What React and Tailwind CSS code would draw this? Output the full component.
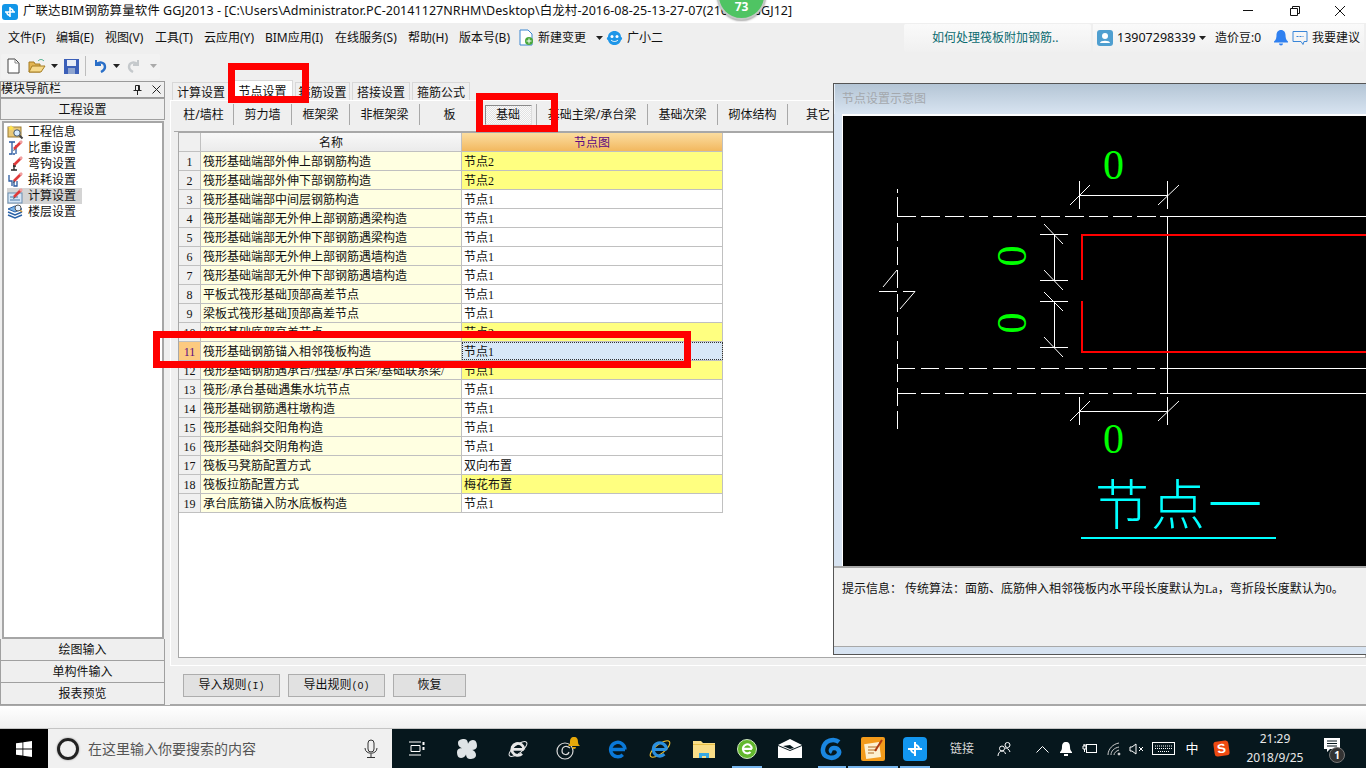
import React from "react";

const ROWS = [
  ["筏形基础端部外伸上部钢筋构造", "节点2", 1],
  ["筏形基础端部外伸下部钢筋构造", "节点2", 1],
  ["筏形基础端部中间层钢筋构造", "节点1", 0],
  ["筏形基础端部无外伸上部钢筋遇梁构造", "节点1", 0],
  ["筏形基础端部无外伸下部钢筋遇梁构造", "节点1", 0],
  ["筏形基础端部无外伸上部钢筋遇墙构造", "节点1", 0],
  ["筏形基础端部无外伸下部钢筋遇墙构造", "节点1", 0],
  ["平板式筏形基础顶部高差节点", "节点1", 0],
  ["梁板式筏形基础顶部高差节点", "节点1", 0],
  ["筏形基础底部高差节点", "节点2", 1],
  ["筏形基础钢筋锚入相邻筏板构造", "节点1", 2],
  ["筏形基础钢筋遇承台/独基/承台梁/基础联系梁/", "节点1", 1],
  ["筏形/承台基础遇集水坑节点", "节点1", 0],
  ["筏形基础钢筋遇柱墩构造", "节点1", 0],
  ["筏形基础斜交阳角构造", "节点1", 0],
  ["筏形基础斜交阴角构造", "节点1", 0],
  ["筏板马凳筋配置方式", "双向布置", 0],
  ["筏板拉筋配置方式", "梅花布置", 1],
  ["承台底筋锚入防水底板构造", "节点1", 0],
];

const Caret = ({ c = "#222" }) => (
  <svg width="7" height="4" viewBox="0 0 7 4"><path d="M0 0h7L3.5 4z" fill={c} /></svg>
);

const LogoApp = () => (
  <svg width="16" height="16" viewBox="0 0 16 16">
    <rect width="16" height="16" rx="3" fill="#1296e8" />
    <path d="M8 3v10M3 8h10M8 5a2.5 2.5 0 0 1 3 3M8 11a2.5 2.5 0 0 1-3-3" stroke="#fff" strokeWidth="1.6" fill="none" />
  </svg>
);

const EIcon = ({ color, ring, size = 24, ringColor }) => (
  <svg width={size} height={size} viewBox="0 0 24 24" fill="none">
    {ring && <ellipse cx="12" cy="12" rx="13" ry="5" transform="rotate(-38 12 12)" stroke={ringColor || color} strokeWidth="1.2" />}
    <path d="M5 12.5h14M19 12.5a7.2 7.2 0 1 0-2.2 5.2" stroke={color} strokeWidth="3.4" />
  </svg>
);

function NavIcon({ kind }) {
  if (kind === 0)
    return (
      <svg width="17" height="16" viewBox="0 0 17 16">
        <rect x="1" y="3" width="13" height="10" fill="#e8c878" stroke="#9a7a30" />
        <path d="M4 1l1 2 2 0-1.5 1.5.5 2-2-1-2 1 .5-2L1 3h2z" fill="#ffe24a" />
        <circle cx="10" cy="9" r="3.2" fill="#d7ecff" stroke="#456" />
        <path d="M12.5 11.5l3 3" stroke="#444" strokeWidth="2" />
      </svg>
    );
  if (kind === 5)
    return (
      <svg width="17" height="16" viewBox="0 0 17 16">
        <path d="M1 5l7-3 7 3-7 3z" fill="#7ab4ea" stroke="#2a62a8" />
        <path d="M1 8l7 3 7-3M1 11l7 3 7-3" fill="none" stroke="#2a62a8" strokeWidth="1.4" />
        <circle cx="11" cy="4" r="3" fill="#e6f2ff" stroke="#555" />
        <path d="M13 6l2 2" stroke="#c09040" strokeWidth="1.6" />
      </svg>
    );
  return (
    <svg width="17" height="16" viewBox="0 0 17 16" fill="none">
      {kind === 1 && <path d="M2 2h3v12H2M8 2H5M8 14H6M9 5v9" stroke="#2a5aa0" strokeWidth="1.3" />}
      {kind === 2 && <path d="M7 7v7M4 14h6M6 10h3" stroke="#222" strokeWidth="1.3" />}
      {kind === 3 && <path d="M2 3v6h3v5M7 8v6h3V9" stroke="#2a5aa0" strokeWidth="1.3" />}
      {kind === 4 && (
        <>
          <rect x="1" y="5" width="14" height="10" fill="#d4e6f7" stroke="#6a8db0" />
          <path d="M3 9h8M3 12h10" stroke="#4a78a8" />
        </>
      )}
      <path d="M7 9L14 2" stroke="#e03a3a" strokeWidth="2.6" />
      <path d="M13 3l2-2" stroke="#f0a0a0" strokeWidth="2.6" />
      <path d="M7 9l-1 2 2-1z" fill="#333" />
    </svg>
  );
}

const Slot = ({ className = "", children, active }) => (
  <div className={`relative h-full flex items-center justify-center shrink-0 ${className}`}>
    {children}
    {active && <span className="absolute left-[1px] right-[1px] bottom-0 h-[2px] bg-[#76b5ee]" />}
  </div>
);

function Drawing() {
  const w = "#ffffff";
  const L = ({ a, b, c, d, dash }) => (
    <line x1={a} y1={b} x2={c} y2={d} stroke={w} strokeWidth="1" strokeDasharray={dash} />
  );
  return (
    <svg className="w-full h-full block" viewBox="843 116 523 450" shapeRendering="crispEdges">
      <L a={897.5} b={189} c={897.5} d={193} />
      <L a={897.5} b={197} c={897.5} d={216} />
      <L a={897.5} b={223} c={897.5} d={433} dash="18 5.5" />
      {[216.5, 368.5, 393.5].map((y) => (
        <React.Fragment key={y}>
          <L a={897} b={y} c={1160} d={y} dash={y === 368.5 ? "18 6" : "19 5"} />
          <L a={1160} b={y} c={1366} d={y} />
        </React.Fragment>
      ))}
      <L a={1167.5} b={216} c={1167.5} d={393} />
      <g shapeRendering="auto">
        <L a={883} b={287} c={897} d={270} />
        <L a={915} b={291.5} c={900} d={309} />
        <L a={1070} b={205} c={1090} d={185} />
        <L a={1158} b={205} c={1179} d={185} />
        <L a={1070} b={421} c={1090} d={401} />
        <L a={1158} b={421} c={1179} d={401} />
        <L a={1044} b={224} c={1063} d={244} />
        <L a={1044} b={270} c={1063} d={290} />
        <L a={1044} b={292} c={1063} d={311} />
        <L a={1044} b={337} c={1063} d={357} />
      </g>
      <L a={879} b={291.5} c={897} d={291.5} />
      <L a={903} b={291.5} c={915} d={291.5} />
      {[[195.5, 181, 209], [411.5, 397, 425]].map(([y, t, b]) => (
        <React.Fragment key={y}>
          <L a={1079} b={y} c={1167} d={y} />
          <L a={1079.5} b={t} c={1079.5} d={b} />
          <L a={1167.5} b={t} c={1167.5} d={b} />
        </React.Fragment>
      ))}
      {[[234.5, 280.5], [301.5, 347.5]].map(([t, b]) => (
        <React.Fragment key={t}>
          <L a={1054.5} b={t} c={1054.5} d={b} />
          <L a={1040} b={t} c={1068} d={t} />
          <L a={1040} b={b} c={1068} d={b} />
        </React.Fragment>
      ))}
      <path d="M1366 234.5H1081.5V280M1081.5 301V351.5H1366" fill="none" stroke="#ff0000" strokeWidth="2" />
      <g fill="#00ff00" fontFamily="'Liberation Serif', serif" fontSize="42" textAnchor="middle" shapeRendering="auto">
        <text x="1113.5" y="178.500">0</text>
        <text x="1113.5" y="452.500">0</text>
        <text x="1012" y="270" transform="rotate(-90 1012 256)">0</text>
        <text x="1012" y="337" transform="rotate(-90 1012 323)">0</text>
      </g>
      <g fill="#00ffff" fontFamily="'Noto Sans CJK SC', sans-serif" fontSize="54" fontWeight="300" textAnchor="middle" shapeRendering="auto">
        <text x="1122" y="525">节</text>
        <text x="1178" y="525">点</text>
        <text x="1235" y="525">一</text>
      </g>
      <path d="M1081 538h195" stroke="#00ffff" strokeWidth="2" />
    </svg>
  );
}

export default function App() {
  return (
    <div className="relative w-[1366px] h-[768px] overflow-hidden flex flex-col bg-[#efefef] text-[12px] leading-none text-[#111] font-['Noto_Sans','Noto_Sans_CJK_SC',sans-serif]">
      {/* title bar */}
      <div className="h-[23px] shrink-0 bg-white flex items-center relative">
        <div className="ml-[2px] mr-[5px] flex"><LogoApp /></div>
        <span className="whitespace-nowrap text-[12.5px] tracking-[0.05px]">广联达BIM钢筋算量软件 GGJ2013 - [C:\Users\Administrator.PC-20141127NRHM\Desktop\白龙村-2016-08-25-13-27-07(2160版-GGJ12]</span>
        <div className="ml-auto mr-[3px] flex items-center h-full">
          <svg width="46" height="23" viewBox="0 0 46 23"><path d="M18 10.5h10" stroke="#111" /></svg>
          <svg width="46" height="23" viewBox="0 0 46 23" fill="none" stroke="#111"><path d="M19.5 8.5h7v7h-7zM21.5 8.5v-2h7v7h-2" /></svg>
          <svg width="46" height="23" viewBox="0 0 46 23" stroke="#111"><path d="M18 6l10 10M28 6L18 16" /></svg>
        </div>
        <div className="absolute left-[717px] top-[-29px] w-[49px] h-[49px] rounded-full bg-[#4fc463] border-[2px] border-[#c4c8c6] shadow-[0_1px_2px_rgba(0,0,0,0.35)] flex items-end justify-center pb-[5px] text-white font-bold text-[12px]">73</div>
      </div>

      {/* menu */}
      <div className="h-[29px] shrink-0 flex items-center relative">
        <div className="w-[8px]" />
        <span className="w-[48px]">文件(F)</span>
        <span className="w-[49px]">编辑(E)</span>
        <span className="w-[50px]">视图(V)</span>
        <span className="w-[49px]">工具(T)</span>
        <span className="w-[61px]">云应用(Y)</span>
        <span className="w-[70px]">BIM应用(I)</span>
        <span className="w-[73px]">在线服务(S)</span>
        <span className="w-[51px]">帮助(H)</span>
        <span className="w-[60px]">版本号(B)</span>
        <svg width="15" height="17" viewBox="0 0 15 17" className="mr-[4px]">
          <path d="M1 1h8l4 4v11H1z" fill="#fff" stroke="#3a86d0" />
          <circle cx="10" cy="12" r="4" fill="#4aa83c" />
          <path d="M10 9.5v5M7.5 12h5" stroke="#fff" />
        </svg>
        <span className="w-[58px]">新建变更</span>
        <Caret />
        <svg width="17" height="16" viewBox="0 0 17 16" className="ml-[3px] mr-[4px]">
          <path d="M8.500 1C12 1 15 3.500 15 7c1.500 0 1.500 3 0 3-.5 3-3.500 5-6.500 5S2.500 13 2 10c-1.500 0-1.500-3 0-3 0-3.500 3-6 6.500-6z" fill="#1e96e8" />
          <circle cx="6" cy="6.500" r="1.500" fill="#fff" /><circle cx="11" cy="6.500" r="1.500" fill="#fff" />
          <path d="M5 10c2 2 5 2 7 0" stroke="#fff" fill="none" />
        </svg>
        <span>广小二</span>

        <div className="absolute left-[904px] top-[1px] w-[187px] h-[28px] rounded-[2px] bg-gradient-to-b from-[#fafafa] to-[#f0f0f0] flex items-center pl-[28px] text-[#0a6a70]">如何处理筏板附加钢筋..</div>
        <div className="absolute left-[1093px] right-[2px] top-[1px] h-[28px] bg-gradient-to-b from-[#fafafa] to-[#f0f0f0] flex items-center">
          <svg width="16" height="16" viewBox="0 0 16 16" className="ml-[4px]">
            <rect width="16" height="16" rx="3" fill="#4f9fd0" />
            <circle cx="8" cy="6" r="3" fill="#fff" /><path d="M3 13c0-3 10-3 10 0z" fill="#fff" />
          </svg>
          <span className="w-[86px] pl-[4px] text-[12.5px]">13907298339</span>
          <Caret />
          <span className="ml-[9px] w-[50px] text-[#111]">造价豆:0</span>
          <svg width="14" height="16" viewBox="0 0 14 16" className="ml-[9px]"><path d="M7 0c3 0 4.500 2.500 4.500 5s.5 5 2.500 6.500v1H0v-1C2 10 2.500 7.500 2.500 5S4 0 7 0zM5 13.500h4a2 2 0 0 1-4 0z" fill="#2f80f0" /></svg>
          <svg width="16" height="16" viewBox="0 0 16 16" fill="none" className="ml-[4px]"><path d="M1 1.500h14v10H12l-1 3-2-3H1z" stroke="#3a86d8" /><path d="M4.500 6.500h2M7.500 6.500h2M10.500 6.500h1" stroke="#3a86d8" /></svg>
          <span className="ml-[4px]">我要建议</span>
        </div>
      </div>

      {/* toolbar */}
      <div className="h-[28px] shrink-0 flex items-center">
        <div className="ml-[1px] h-[25px] w-[159px] bg-[#f2f2f2] rounded-[2px] flex items-center pl-[6px]">
          <svg width="13" height="16" viewBox="0 0 13 16"><path d="M1 1h7l4 4v10H1z" fill="#fff" stroke="#444" /><path d="M8 1v4h4" fill="none" stroke="#888" /></svg>
          <svg width="18" height="16" viewBox="0 0 18 16" className="ml-[8px]"><path d="M1 14V4h5l1 2h5v8z" fill="#e2b552" stroke="#a57d22" /><path d="M1 14l3-6h13l-4 6z" fill="#f6d98a" stroke="#a57d22" /><path d="M10 3c2-2 4-2 6 0" fill="none" stroke="#4a8" /></svg>
          <div className="ml-[5px] mr-[4px]"><Caret /></div>
          <svg width="15" height="15" viewBox="0 0 15 15" className="ml-[2px]"><rect width="15" height="15" fill="#3b5fb8" /><rect x="3" y="1" width="9" height="6" fill="#e8edf7" /><rect x="4" y="9" width="7" height="6" fill="#8ea4cf" /></svg>
          <div className="w-px h-[20px] bg-[#bdbdbd] ml-[6px] mr-[7px]" />
          <svg width="14" height="14" viewBox="0 0 14 14" fill="none"><path d="M3 1v5h5" stroke="#2a6fc8" strokeWidth="2" /><path d="M3 6c3-4 9-3 9 2 0 2-2 4-4 5" stroke="#2a6fc8" strokeWidth="2.4" /></svg>
          <div className="ml-[6px] mr-[7px]"><Caret /></div>
          <svg width="14" height="14" viewBox="0 0 14 14" fill="none"><path d="M11 1v5H6" stroke="#c5c9cc" strokeWidth="2" /><path d="M11 6C8 2 2 3 2 8c0 2 2 4 4 5" stroke="#c5c9cc" strokeWidth="2.4" /></svg>
          <div className="ml-[9px]"><Caret c="#aaa" /></div>
        </div>
      </div>

      {/* body */}
      <div className="h-[625px] shrink-0 flex relative">
        {/* left navigation */}
        <aside className="w-[165px] shrink-0 pt-[1px] flex flex-col">
          <div className="h-[17px] border border-[#9a9a9a] flex items-center justify-between">
            <span className="text-[12px] mb-[2px]">模块导航栏</span>
            <div className="flex items-center gap-[10px] pr-[3px]">
              <svg width="9" height="10" viewBox="0 0 9 10" fill="none" stroke="#222"><path d="M2.500 .5h4v5h-4zM.5 5.500h8M4.500 5.500V10M5.500 1v4" /></svg>
              <svg width="9" height="9" viewBox="0 0 9 9" stroke="#222"><path d="M.5.5l8 8M8.500.5l-8 8" /></svg>
            </div>
          </div>
          <div className="h-[22px] border border-[#a0a0a0] flex items-center justify-center bg-[#efefef] pt-[1px]">工程设置</div>
          <div className="mt-[1px] ml-[2px] mr-[1px] h-[518px] border-[2px] border-[#a6a6a6] bg-white pt-[1px] pl-[3px]">
            {["工程信息", "比重设置", "弯钩设置", "损耗设置", "计算设置", "楼层设置"].map((t, i) => (
              <div key={t} className="h-[16px] flex items-center">
                <div className={`h-[16px] w-[75px] flex items-center ${i === 4 ? "bg-[#d4d4d4]" : ""}`}>
                  <NavIcon kind={i} />
                  <span className="ml-[4px] text-[12px]">{t}</span>
                </div>
              </div>
            ))}
          </div>
          {["绘图输入", "单构件输入", "报表预览"].map((t) => (
            <div key={t} className="h-[22px] pt-[1px] border border-t-0 first:border-t border-[#a0a0a0] flex items-center justify-center bg-[#efefef]">{t}</div>
          ))}
        </aside>

        {/* main */}
        <main className="ml-[5px] flex-1 min-w-0 flex flex-col">
          <div className="h-[20px] flex items-end pl-[2px] gap-[2px]">
            {["计算设置", "节点设置", "箍筋设置", "搭接设置", "箍筋公式"].map((t, i) => (
              <div key={t} className={`flex items-center justify-center pt-[2px] border border-b-0 border-[#d8d8d8] ${i === 1 ? "w-[61px] h-[20px] bg-white" : i === 2 ? "w-[55px] h-[18px]" : "w-[58px] h-[18px]"}`}>{t}</div>
            ))}
          </div>
          <div className="h-[565px] border-t border-l border-[#ffffff] pl-[3px] flex flex-col">
            <div className="h-[31px] flex items-start pt-[3px] border-b border-[#a8a8a8]">
              {[["柱/墙柱", "w-[60px]"], ["剪力墙", "w-[58px]"], ["框架梁", "w-[58px]"], ["非框架梁", "w-[70px]"], ["板", "w-[60px]"], ["基础", "w-[57px]"], ["基础主梁/承台梁", "w-[111px]"], ["基础次梁", "w-[70px]"], ["砌体结构", "w-[70px]"], ["其它", "w-[60px]"]].map(([t, c], i) => (
                <div key={t} className={`${c} shrink-0 h-[21px] flex items-center justify-center border-r border-[#a8a8a8] last:border-r-0`}>
                  {i === 5 ? (
                    <div className="w-[47px] h-[20px] border border-[#8a8a8a] border-r-[#dddddd] border-b-[#dddddd] bg-[repeating-conic-gradient(#e2e2e2_0_25%,#fafafa_0_50%)] bg-[length:2px_2px] flex items-center justify-center">{t}</div>
                  ) : t}
                </div>
              ))}
            </div>
            {/* grid */}
            <div className="ml-[4px] h-[526px] border border-[#a8a8a8] bg-white font-['Liberation_Serif','Noto_Sans_CJK_SC',serif]">
              <div className="h-[19px] w-[544px] flex border-b border-[#c0c0c0] text-[12px]">
                <div className="w-[22px] border-r border-[#c0c0c0] bg-[#f0f0f0]" />
                <div className="w-[261px] pt-[1px] border-r border-[#c0c0c0] bg-gradient-to-b from-[#f8f8f8] to-[#ebebeb] flex items-center justify-center">名称</div>
                <div className="w-[261px] pt-[1px] border-r border-[#c0c0c0] bg-gradient-to-b from-[#fbdd9f] to-[#f2b85e] flex items-center justify-center text-[#5c0a80]">节点图</div>
              </div>
              {ROWS.map(([name, val, st], i) => (
                <div key={i} className="h-[19px] flex border-b border-[#c0c0c0] w-[544px]">
                  <div className={`w-[22px] shrink-0 pt-[1px] border-r border-[#c0c0c0] flex items-center justify-center ${st === 2 ? "bg-[#fcca80] text-[#5c0a80]" : "bg-[#f0f0f0]"}`}>{i + 1}</div>
                  <div className="w-[261px] shrink-0 pt-[1px] border-r border-[#c0c0c0] bg-[#ffffe1] flex items-center pl-[2px] whitespace-nowrap overflow-hidden">{name}</div>
                  <div className={`w-[261px] shrink-0 pt-[1px] border-r border-[#c0c0c0] flex items-center pl-[2px] ${st === 1 ? "bg-[#ffff80]" : st === 2 ? "bg-[#d8e8f7] outline-1 outline-dotted outline-[#333] -outline-offset-1" : "bg-white"}`}>{val}</div>
                </div>
              ))}
            </div>
          </div>
          {/* bottom buttons */}
          <div className="h-[40px] border-t border-b border-[#a8a8a8] border-t-white flex items-center pl-[13px] font-['Liberation_Serif','Noto_Sans_CJK_SC',serif]">
            <button className="w-[97px] h-[23px] bg-[#e1e1e1] border border-[#adadad] mr-[8px]">导入规则<span className="font-['Liberation_Mono',monospace] text-[10px]">(I)</span></button>
            <button className="w-[97px] h-[23px] bg-[#e1e1e1] border border-[#adadad] mr-[8px]">导出规则<span className="font-['Liberation_Mono',monospace] text-[10px]">(O)</span></button>
            <button className="w-[73px] h-[23px] bg-[#e1e1e1] border border-[#adadad]">恢复</button>
          </div>
        </main>

        {/* floating preview window */}
        <section className="absolute left-[833px] top-[3px] w-[533px] h-[572px] border-t border-l border-b border-[#555] bg-[#d7e3f1] flex flex-col">
          <div className="h-[30px] shrink-0 pl-[7px] flex items-center text-[#a4a8ad] bg-gradient-to-b from-[#b4c5d5] to-[#d8e4f1] border-l border-[#e8eff7]">节点设置示意图</div>
          <div className="ml-[8px] border-l-[1px] border-t-[2px] border-white h-[452px] bg-black shrink-0">
            <Drawing />
          </div>
          <div className="h-[81px] shrink-0 bg-[#f0f0f0] border-t-[2px] border-b border-[#a8a8a8] pt-[15px] pl-[8px] font-['Liberation_Serif','Noto_Sans_CJK_SC',serif] whitespace-nowrap">
            提示信息：  传统算法：面筋、底筋伸入相邻筏板内水平段长度默认为La，弯折段长度默认为0。
          </div>
        </section>
      </div>

      {/* strip */}
      <div className="h-[23px] shrink-0 bg-gradient-to-b from-[#ffffff] to-[#f0f0f0] border-t border-[#a8a8a8]" />

      {/* taskbar */}
      <div className="h-[40px] shrink-0 bg-[#06171d] flex items-stretch text-white border-t border-[#c4c4c4]">
        <div className="w-[48px] bg-black flex items-center justify-center">
          <svg width="16" height="16" viewBox="0 0 16 16" fill="#fff"><path d="M0 2.300l6.500-.9v6.200H0zM7.300 1.300L16 0v7.600H7.300zM0 8.400h6.500v6.200L0 13.700zM7.300 8.400H16V16l-8.700-1.300z" /></svg>
        </div>
        <div className="w-[344px] bg-[#f0f0f0] flex items-center pl-[9px] text-[#555] text-[14px]">
          <div className="w-[22px] h-[22px] rounded-full border-[3px] border-[#222] shadow-[0_0_2px_#888]" />
          <span className="ml-[9px]">在这里输入你要搜索的内容</span>
          <svg width="14" height="20" viewBox="0 0 14 20" fill="none" stroke="#333" className="ml-[108px]"><rect x="4" y="1" width="6" height="12" rx="3" /><path d="M1 9c0 7 12 7 12 0M7 15v3M3 18.500h8" /></svg>
        </div>
        <Slot className="w-[49px]">
          <svg width="17" height="15" viewBox="0 0 17 15" fill="none" stroke="#fff"><path d="M1 1h12M1 14h12M3 4.500h9v6H3z" /><path d="M15.500 1v3M15.500 6v3" strokeWidth="2" /></svg>
        </Slot>
        <Slot className="w-[51px]">
          <svg width="22" height="22" viewBox="0 0 22 22" fill="#dfe4e6"><path d="M11 11C6 11 2 9 2 5c0-3 3-4 6-4 4 0 5 5 3 10zM11 11c5 0 9 2 9 6 0 3-3 4-6 4-4 0-5-5-3-10zM11 11c0-5 2-9 6-9 3 0 4 3 4 6 0 4-5 5-10 3zM11 11c0 5-2 9-6 9-3 0-4-3-4-6 0-4 5-5 10-3z" /></svg>
        </Slot>
        <Slot className="w-[51px]"><EIcon color="#e8e8e8" ring size={20} /></Slot>
        <Slot className="w-[50px]">
          <svg width="28" height="26" viewBox="0 0 28 26" fill="none"><circle cx="11" cy="15" r="8" stroke="#d8d8d8" strokeWidth="1.200" /><path d="M16 12c-3-3-8-2-8 3 0 4 6 5 7 1" stroke="#d8d8d8" strokeWidth="1.200" /><path d="M20 1c3 0 4 2 4 5 0 2 1 3 2 4H14c1-1 2-2 2-4 0-3 1-5 4-5zM18 11h4a2 2 0 0 1-4 0z" fill="#e6a80a" /></svg>
        </Slot>
        <Slot className="w-[50px]"><EIcon color="#0a78d7" size={24} /></Slot>
        <Slot className="w-[34px]"><EIcon color="#2b90e0" ring ringColor="#f2c230" size={22} /></Slot>
        <Slot className="w-[54px]">
          <svg width="22" height="19" viewBox="0 0 22 19"><path d="M0 2h8l2 2h12v15H0z" fill="#f9dd87" /><rect x="0" y="5" width="22" height="1" fill="#e8c048" /><path d="M6 19v-5h10v5h-3v-2H9v2z" fill="#37a8e4" /></svg>
        </Slot>
        <Slot className="w-[32px]" active>
          <div className="w-[20px] h-[20px] rounded-full bg-[#63b82e] border border-[#cfe8c0] flex items-center justify-center"><EIcon color="#fff" size={15} /></div>
        </Slot>
        <Slot className="w-[54px]">
          <svg width="24" height="19" viewBox="0 0 24 19"><path d="M0 6L12 0l12 6-12 5z" fill="#fff" /><path d="M0 7l12 5 12-5v12H0z" fill="#fff" /><path d="M5 7l7-1 4 3-4 1z" fill="#06171d" /></svg>
        </Slot>
        <Slot className="w-[30px]" active>
          <svg width="24" height="24" viewBox="0 0 24 24" fill="none"><path d="M19 5C14 1 4 3 3 12c-1 8 9 11 14 7 4-3 2-8-3-8-3 0-4 3-2 4" stroke="#1a86e0" strokeWidth="4.500" /></svg>
        </Slot>
        <Slot className="w-[52px]" active>
          <svg width="24" height="24" viewBox="0 0 24 24"><rect width="24" height="24" rx="2" fill="#f39b1b" /><rect x="4" y="6" width="15" height="15" fill="#fdf0d0" transform="rotate(-8 12 13)" /><path d="M7 10h9M7 13h9M7 16h6" stroke="#b06a20" /><path d="M14 14L21 3" stroke="#b03a12" strokeWidth="2" /></svg>
        </Slot>
        <Slot className="w-[32px]" active>
          <svg width="24" height="24" viewBox="0 0 24 24"><rect width="24" height="24" rx="4" fill="#1296f0" /><path d="M12 5v14M5 12h14M12 8a4 4 0 0 1 4 4M12 16a4 4 0 0 1-4-4" stroke="#fff" strokeWidth="2" fill="none" /></svg>
        </Slot>
        <Slot className="w-[62px] text-[#d8d8d8]"><span className="text-[12px]">链接</span></Slot>
        <Slot className="w-[24px]">
          <svg width="16" height="16" viewBox="0 0 16 16" fill="none" stroke="#fff"><circle cx="10.500" cy="4" r="2.500" /><circle cx="5" cy="7.500" r="2.500" /><path d="M1 15c0-3 2-5 4-5s3 1 3.500 3M8 7c2 0 4 1 5 4" /></svg>
        </Slot>
        <div className="w-[13px]" />
        <Slot className="w-[24px]"><svg width="13" height="8" viewBox="0 0 13 8" fill="none" stroke="#fff"><path d="M.5 7.500l6-6 6 6" /></svg></Slot>
        <Slot className="w-[24px]"><svg width="14" height="16" viewBox="0 0 14 16" fill="#fff"><path d="M7 1c3 0 4 2 4 5s1 4 2 5v1H1v-1c1-1 2-2 2-5s1-5 4-5zM2 14h10" /><rect x="5" y="13" width="4" height="2" /></svg></Slot>
        <Slot className="w-[24px]"><svg width="16" height="11" viewBox="0 0 16 11" fill="none" stroke="#fff"><rect x="4.500" y="1.500" width="10" height="8" /><path d="M1 3v3h3V3zM2 1v2M3 1v2M2.500 6v3" /></svg></Slot>
        <Slot className="w-[24px]"><svg width="14" height="14" viewBox="0 0 14 14" fill="none" stroke="#ccc"><path d="M1 13C1 7 6 2 12 1M4 13c0-4 3-7 8-8M7 13c0-2 2-4 5-5" /><circle cx="12" cy="12" r="1" fill="#fff" /></svg></Slot>
        <Slot className="w-[20px]"><svg width="15" height="12" viewBox="0 0 15 12" fill="none" stroke="#fff"><path d="M1 4v4h2l4 3V1L3 4zM10 4l4 4M14 4l-4 4" /></svg></Slot>
        <Slot className="w-[34px]"><svg width="23" height="13" viewBox="0 0 23 13" fill="none" stroke="#fff"><rect x=".5" y=".5" width="22" height="12" /><path d="M3 4h17M3 6.500h17M6 9.500h11" strokeDasharray="1 1" /></svg></Slot>
        <Slot className="w-[24px]"><span className="text-[13px]">中</span></Slot>
        <Slot className="w-[34px]">
          <div className="w-[15px] h-[15px] rounded-[3px] bg-[#ee4a12] text-white font-bold text-[13px] flex items-center justify-center rotate-[-8deg] font-['Liberation_Sans',sans-serif]">S</div>
        </Slot>
        <Slot className="w-[74px] flex-col gap-[7px] text-[12px] text-[#e8e8e8]">
          <span>21:29</span>
          <span>2018/9/25</span>
        </Slot>
        <Slot className="w-[40px]">
          <svg width="16" height="15" viewBox="0 0 16 15" className="mb-[6px]"><path d="M0 0h16v11H6l-3 3v-3H0z" fill="#fff" /><path d="M3 3h10M3 5.500h10M3 8h10" stroke="#06171d" /></svg>
          <span className="absolute left-[17px] top-[18px] w-[16px] h-[16px] rounded-full bg-[#333] border border-[#777] text-white font-bold text-[10px] flex items-center justify-center">1</span>
        </Slot>
      </div>

      {/* red annotation boxes */}
      <div className="absolute left-[228px] top-[63px] w-[81px] h-[40px] border-[7px] border-[#ff0000]" />
      <div className="absolute left-[476px] top-[93px] w-[82px] h-[39px] border-[7px] border-[#ff0000]" />
      <div className="absolute left-[153px] top-[331px] w-[538px] h-[37px] border-[7px] border-[#ff0000]" />
    </div>
  );
}
